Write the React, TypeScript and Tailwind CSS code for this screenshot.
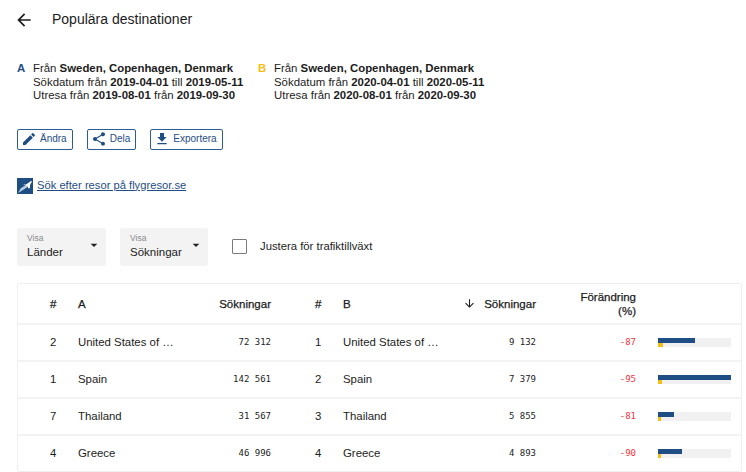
import { type ReactNode } from "react";

const rows = [
  { a: 2, nameA: "United States of …", valA: "72 312", b: 1, nameB: "United States of …", valB: "9 132", change: "-87", blue: 37, yellow: 5 },
  { a: 1, nameA: "Spain", valA: "142 561", b: 2, nameB: "Spain", valB: "7 379", change: "-95", blue: 73, yellow: 4 },
  { a: 7, nameA: "Thailand", valA: "31 567", b: 3, nameB: "Thailand", valB: "5 855", change: "-81", blue: 16, yellow: 3 },
  { a: 4, nameA: "Greece", valA: "46 996", b: 4, nameB: "Greece", valB: "4 893", change: "-90", blue: 24, yellow: 3 },
];

const gridCols =
  "grid grid-cols-[60px_100px_93px_72px_100px_93px_100px_1fr] items-center";

const Icon = ({ d, className }: { d: string; className: string }) => (
  <svg viewBox="0 0 24 24" className={className} fill="currentColor">
    <path d={d} />
  </svg>
);

const Period = ({
  letter,
  color,
  search,
  travel,
}: {
  letter: string;
  color: string;
  search: [string, string];
  travel: [string, string];
}) => (
  <div className="flex">
    <span className={`w-[16px] font-bold ${color}`}>{letter}</span>
    <div>
      <div>
        Från <b>Sweden, Copenhagen, Denmark</b>
      </div>
      <div>
        Sökdatum från <b>{search[0]}</b> till <b>{search[1]}</b>
      </div>
      <div>
        Utresa från <b>{travel[0]}</b> från <b>{travel[1]}</b>
      </div>
    </div>
  </div>
);

const ActionButton = ({ icon, label }: { icon: ReactNode; label: string }) => (
  <button className="flex h-[21px] items-center gap-[3px] rounded-[2px] border border-[#2b5c92] pl-[3px] pr-[5px] text-[10px] text-[#1f4e85]">
    {icon}
    {label}
  </button>
);

const Select = ({ value, className }: { value: string; className: string }) => (
  <div className={`relative h-[38px] rounded-[2px] bg-[#f3f3f3] pl-[10px] pt-[5px] ${className}`}>
    <div className="text-[8.5px] leading-[11px] text-[#8a8a8a]">Visa</div>
    <div className="text-[11.5px] leading-[16px] text-[#222]">{value}</div>
    <Icon
      d="M7 10l5 5 5-5z"
      className="absolute right-[4px] top-[9px] h-[16px] w-[16px] text-[#222]"
    />
  </div>
);

export default function App() {
  return (
    <div className="h-[472px] w-[746px] overflow-hidden bg-white pl-[17px] text-[11.4px] leading-[13.5px] text-[#1c1c1c] [font-family:'Liberation_Sans',sans-serif]">
      <div className="flex h-[39px] items-center">
        <Icon
          d="M20 11H7.83l5.59-5.59L12 4l-8 8 8 8 1.41-1.41L7.83 13H20v-2z"
          className="-ml-[3px] h-[20px] w-[20px]"
        />
        <h1 className="ml-[18px] text-[14px] font-normal">Populära destinationer</h1>
      </div>

      <div className="mt-[23px] grid grid-cols-[241px_1fr]">
        <Period
          letter="A"
          color="text-[#1f4e85]"
          search={["2019-04-01", "2019-05-11"]}
          travel={["2019-08-01", "2019-09-30"]}
        />
        <Period
          letter="B"
          color="text-[#f6bd16]"
          search={["2020-04-01", "2020-05-11"]}
          travel={["2020-08-01", "2020-09-30"]}
        />
      </div>

      <div className="mt-[26px] flex gap-[14px]">
        <ActionButton
          label="Ändra"
          icon={
            <Icon
              d="M3 17.25V21h3.75L17.81 9.94l-3.75-3.75L3 17.25zM20.71 7.04c.39-.39.39-1.02 0-1.41l-2.34-2.34c-.39-.39-1.02-.39-1.41 0l-1.83 1.83 3.75 3.75 1.83-1.83z"
              className="h-[16px] w-[16px]"
            />
          }
        />
        <ActionButton
          label="Dela"
          icon={
            <Icon
              d="M18 16.08c-.76 0-1.44.3-1.96.77L8.91 12.7c.05-.23.09-.46.09-.7s-.04-.47-.09-.7l7.05-4.11c.54.5 1.25.81 2.04.81 1.66 0 3-1.34 3-3s-1.34-3-3-3-3 1.34-3 3c0 .24.04.47.09.7L8.04 9.81C7.5 9.31 6.79 9 6 9c-1.66 0-3 1.34-3 3s1.34 3 3 3c.79 0 1.5-.31 2.04-.81l7.12 4.16c-.05.21-.08.43-.08.65 0 1.61 1.31 2.92 2.92 2.92 1.61 0 2.92-1.31 2.92-2.92s-1.31-2.92-2.92-2.92z"
              className="h-[16px] w-[16px]"
            />
          }
        />
        <ActionButton
          label="Exportera"
          icon={
            <Icon d="M19 9h-4V3H9v6H5l7 7 7-7zM5 18v2h14v-2H5z" className="h-[16px] w-[16px]" />
          }
        />
      </div>

      <a className="mt-[28px] flex items-center gap-[4px] text-[11.2px] text-[#1f4e85] underline" href="#">
        <svg viewBox="0 0 16 16" className="h-[16px] w-[16px]">
          <rect width="16" height="16" fill="#1f4e85" />
          <path d="M1 15 L4 10 L9 7 L12 8 L6 12z" fill="#b9cde0" />
          <path d="M6 6.5 L9 6.5 L14 3 L15 3.5 L13 7 L13 10 L11.5 10.5 L10.5 8 z" fill="#ffffff" />
        </svg>
        Sök efter resor på flygresor.se
      </a>

      <div className="mt-[34px] flex items-center">
        <Select value="Länder" className="w-[89px]" />
        <Select value="Sökningar" className="ml-[14px] w-[88px]" />
        <div className="ml-[24px] h-[15px] w-[15px] rounded-[1px] border-[1.5px] border-[#7a7a7a]" />
        <span className="ml-[13px] text-[11.3px]">Justera för trafiktillväxt</span>
      </div>

      <div className="mt-[17px] w-[725px] rounded-[2px] border border-[#efefef]">
        <div className={`${gridCols} h-[39px] pt-[1px] text-[11.5px] leading-[14px] text-[#1c1c1c] [-webkit-text-stroke:0.25px_#1c1c1c]`}>
          <span className="pl-[32px]">#</span>
          <span>A</span>
          <span className="text-right">Sökningar</span>
          <span className="pl-[44px]">#</span>
          <span>B</span>
          <span className="flex items-center justify-end gap-[8px]">
            <Icon
              d="M20 12l-1.41-1.41L13 16.17V4h-2v12.17l-5.58-5.59L4 12l8 8 8-8z"
              className="h-[13px] w-[13px]"
            />
            Sökningar
          </span>
          <span className="text-right">
            Förändring
            <br />
            (%)
          </span>
          <span />
        </div>
        {rows.map((row) => (
          <div key={row.a} className={`${gridCols} h-[37px] border-t-2 border-[#f3f3f3] pt-[1px]`}>
            <span className="pl-[32px]">{row.a}</span>
            <span className="whitespace-nowrap">{row.nameA}</span>
            <span className="text-right text-[9px] [font-family:'DejaVu_Sans_Mono',monospace]">{row.valA}</span>
            <span className="pl-[44px]">{row.b}</span>
            <span className="whitespace-nowrap">{row.nameB}</span>
            <span className="text-right text-[9px] [font-family:'DejaVu_Sans_Mono',monospace]">{row.valB}</span>
            <span className="text-right text-[9px] text-[#f5333f] [font-family:'DejaVu_Sans_Mono',monospace]">{row.change}</span>
            <div className="ml-[22px] h-[9px] w-[73px] bg-[#f1f1f1]">
              <div className="h-[5px] bg-[#1f4e85]" style={{ width: row.blue }} />
              <div className="h-[4px] bg-[#f6bd16]" style={{ width: row.yellow }} />
            </div>
          </div>
        ))}
      </div>
    </div>
  );
}
